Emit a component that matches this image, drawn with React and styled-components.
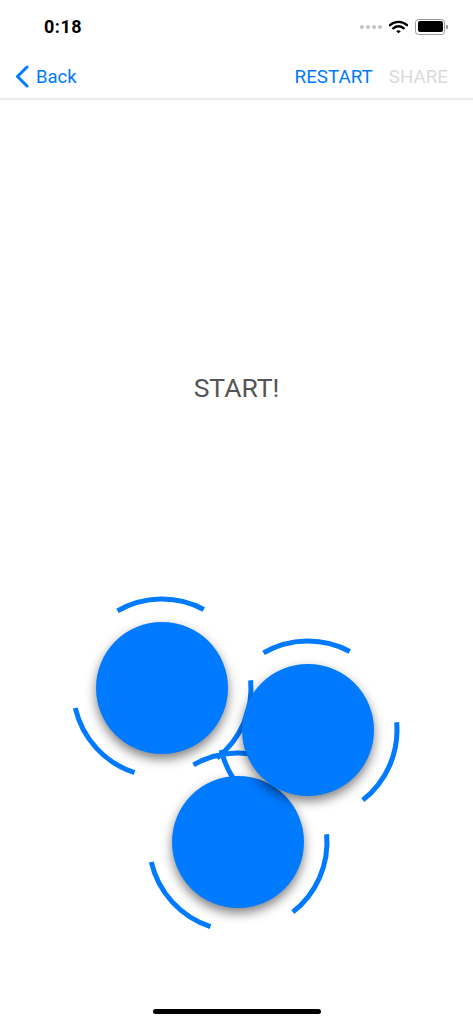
import styled, { createGlobalStyle } from 'styled-components';

const BLUE = '#007AFF';

// piece centres on the board, plus which disk sits on top
const pieces = [
  { x: 162, y: 108, layer: 2 },
  { x: 308, y: 150, layer: 4 },
  { x: 238, y: 262, layer: 3 },
];

// ring segments around each piece, in degrees (0 = right, clockwise)
const segments = [
  [-120, -62],
  [-5, 52],
  [108, 167],
];

const RING_BOX = 95;
const RING_R = 89;

function arcPath([a0, a1]) {
  const rad = (d) => (d * Math.PI) / 180;
  const x0 = RING_BOX + RING_R * Math.cos(rad(a0));
  const y0 = RING_BOX + RING_R * Math.sin(rad(a0));
  const x1 = RING_BOX + RING_R * Math.cos(rad(a1));
  const y1 = RING_BOX + RING_R * Math.sin(rad(a1));
  return `M ${x0.toFixed(2)} ${y0.toFixed(2)} A ${RING_R} ${RING_R} 0 0 1 ${x1.toFixed(2)} ${y1.toFixed(2)}`;
}

const GlobalStyle = createGlobalStyle`
  html, body {
    margin: 0;
    padding: 0;
    background: #fff;
  }
  body {
    font-family: Roboto, "Liberation Sans", sans-serif;
    -webkit-font-smoothing: antialiased;
  }
`;

const Screen = styled.div`
  width: 473px;
  height: 1024px;
  display: flex;
  flex-direction: column;
  background: #fff;
  overflow: hidden;
`;

const StatusBar = styled.div`
  height: 50px;
  display: flex;
  align-items: center;
  justify-content: space-between;
  padding: 3px 25px 0 44px;
  box-sizing: border-box;
`;

const Clock = styled.span`
  font-size: 18px;
  font-weight: 700;
  letter-spacing: 0.5px;
  color: #000;
`;

const Indicators = styled.div`
  display: flex;
  align-items: center;
  gap: 6px;
`;

const SignalDots = styled.div`
  display: flex;
  gap: 2px;
  margin-right: 1px;
  span {
    width: 4px;
    height: 4px;
    border-radius: 50%;
    background: #c4c4c4;
  }
`;

const Battery = styled.div`
  display: flex;
  align-items: center;
  gap: 1px;
  margin-left: 1px;
`;

const BatteryBody = styled.div`
  width: 25px;
  height: 11px;
  border: 1px solid #9a9a9a;
  border-radius: 3.5px;
  padding: 1.5px;
  box-sizing: content-box;
  div {
    width: 100%;
    height: 100%;
    background: #000;
    border-radius: 2px;
  }
`;

const BatteryCap = styled.div`
  width: 2px;
  height: 4px;
  background: #9a9a9a;
  border-radius: 0 1px 1px 0;
`;

const NavBar = styled.div`
  height: 50px;
  display: flex;
  align-items: center;
  justify-content: space-between;
  padding: 5px 25px 0 15px;
  box-sizing: border-box;
  border-bottom: 2px solid #ececec;
`;

const BackButton = styled.button`
  display: flex;
  align-items: center;
  gap: 7px;
  border: none;
  background: none;
  padding: 0;
  font-family: inherit;
  font-size: 18.5px;
  color: ${BLUE};
`;

const Actions = styled.div`
  display: flex;
  gap: 16px;
`;

const Action = styled.button`
  border: none;
  background: none;
  padding: 0;
  font-family: inherit;
  font-size: 18.8px;
  color: ${(p) => (p.$disabled ? '#dadada' : BLUE)};
`;

const Main = styled.div`
  flex: 1;
  display: flex;
  flex-direction: column;
`;

const Prompt = styled.div`
  margin-top: 271px;
  height: 34px;
  line-height: 34px;
  text-align: center;
  font-size: 26.5px;
  color: #555;
`;

const Board = styled.div`
  position: relative;
  isolation: isolate;
  margin-top: 175px;
  height: 360px;
`;

const Piece = styled.div`
  position: absolute;
  left: ${(p) => p.$x - RING_BOX}px;
  top: ${(p) => p.$y - RING_BOX}px;
  width: ${RING_BOX * 2}px;
  height: ${RING_BOX * 2}px;
`;

const Ring = styled.svg`
  position: absolute;
  inset: 0;
  z-index: 1;
`;

const Disk = styled.div`
  position: absolute;
  left: ${RING_BOX - 66}px;
  top: ${RING_BOX - 66}px;
  width: 132px;
  height: 132px;
  border-radius: 50%;
  background: ${BLUE};
  box-shadow: 0 5px 11px rgba(0, 0, 0, 0.5);
  z-index: ${(p) => p.$layer};
`;

const HomeArea = styled.div`
  height: 24px;
  display: flex;
  justify-content: center;
`;

const HomeBar = styled.div`
  width: 168px;
  height: 5px;
  border-radius: 3px;
  background: #000;
  margin-top: 9px;
`;

function Wifi() {
  return (
    <svg width="19" height="14" viewBox="0 0 19 14">
      <path d="M1 5.2 A12.5 12.5 0 0 1 18 5.2" fill="none" stroke="#000" strokeWidth="2.4" strokeLinecap="round" />
      <path d="M4.2 8.3 A8 8 0 0 1 14.8 8.3" fill="none" stroke="#000" strokeWidth="2.4" strokeLinecap="round" />
      <path d="M7.2 11.2 L9.5 13.3 L11.8 11.2 A3.4 3.4 0 0 0 7.2 11.2 Z" fill="#000" />
    </svg>
  );
}

function Chevron() {
  return (
    <svg width="14" height="23" viewBox="0 0 14 23">
      <polyline points="12,2 2.5,11.5 12,21" fill="none" stroke={BLUE} strokeWidth="3" strokeLinecap="round" strokeLinejoin="round" />
    </svg>
  );
}

export default function App() {
  return (
    <>
      <GlobalStyle />
      <Screen>
        <StatusBar>
          <Clock>0:18</Clock>
          <Indicators>
            <SignalDots>
              <span />
              <span />
              <span />
              <span />
            </SignalDots>
            <Wifi />
            <Battery>
              <BatteryBody>
                <div />
              </BatteryBody>
              <BatteryCap />
            </Battery>
          </Indicators>
        </StatusBar>

        <NavBar>
          <BackButton>
            <Chevron />
            Back
          </BackButton>
          <Actions>
            <Action>RESTART</Action>
            <Action $disabled>SHARE</Action>
          </Actions>
        </NavBar>

        <Main>
          <Prompt>START!</Prompt>
          <Board>
            {pieces.map((p, i) => (
              <Piece key={i} $x={p.x} $y={p.y}>
                <Ring width={RING_BOX * 2} height={RING_BOX * 2}>
                  {segments.map((s, j) => (
                    <path key={j} d={arcPath(s)} fill="none" stroke={BLUE} strokeWidth="5" />
                  ))}
                </Ring>
                <Disk $layer={p.layer} />
              </Piece>
            ))}
          </Board>
        </Main>

        <HomeArea>
          <HomeBar />
        </HomeArea>
      </Screen>
    </>
  );
}
